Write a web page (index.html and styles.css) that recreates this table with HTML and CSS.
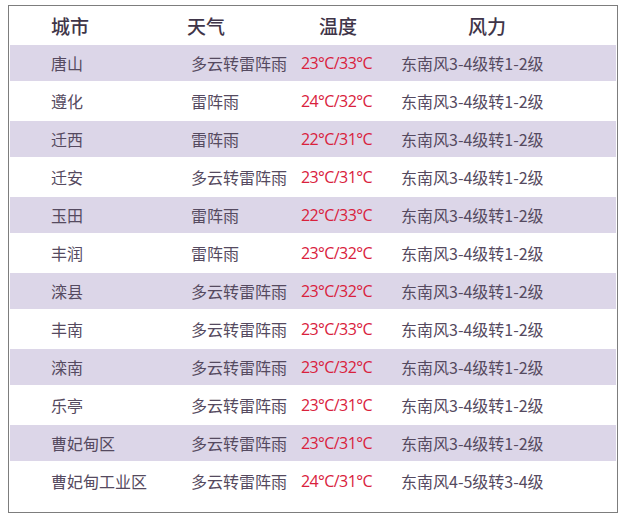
FILE: index.html
```html
<!DOCTYPE html>
<html lang="zh">
<head>
<meta charset="utf-8">
<link rel="stylesheet" href="styles.css">
</head>
<body>
<div class="box">
  <div class="row head">
    <div class="c h1">城市</div>
    <div class="c h2">天气</div>
    <div class="c h3">温度</div>
    <div class="c h4">风力</div>
  </div>
  <div class="row alt"><div class="c">唐山</div><div class="c">多云转雷阵雨</div><div class="c t">23°C/33°C</div><div class="c">东南风3-4级转1-2级</div></div>
  <div class="row"><div class="c">遵化</div><div class="c">雷阵雨</div><div class="c t">24°C/32°C</div><div class="c">东南风3-4级转1-2级</div></div>
  <div class="row alt"><div class="c">迁西</div><div class="c">雷阵雨</div><div class="c t">22°C/31°C</div><div class="c">东南风3-4级转1-2级</div></div>
  <div class="row"><div class="c">迁安</div><div class="c">多云转雷阵雨</div><div class="c t">23°C/31°C</div><div class="c">东南风3-4级转1-2级</div></div>
  <div class="row alt"><div class="c">玉田</div><div class="c">雷阵雨</div><div class="c t">22°C/33°C</div><div class="c">东南风3-4级转1-2级</div></div>
  <div class="row"><div class="c">丰润</div><div class="c">雷阵雨</div><div class="c t">23°C/32°C</div><div class="c">东南风3-4级转1-2级</div></div>
  <div class="row alt"><div class="c">滦县</div><div class="c">多云转雷阵雨</div><div class="c t">23°C/32°C</div><div class="c">东南风3-4级转1-2级</div></div>
  <div class="row"><div class="c">丰南</div><div class="c">多云转雷阵雨</div><div class="c t">23°C/33°C</div><div class="c">东南风3-4级转1-2级</div></div>
  <div class="row alt"><div class="c">滦南</div><div class="c">多云转雷阵雨</div><div class="c t">23°C/32°C</div><div class="c">东南风3-4级转1-2级</div></div>
  <div class="row"><div class="c">乐亭</div><div class="c">多云转雷阵雨</div><div class="c t">23°C/31°C</div><div class="c">东南风3-4级转1-2级</div></div>
  <div class="row alt"><div class="c">曹妃甸区</div><div class="c">多云转雷阵雨</div><div class="c t">23°C/31°C</div><div class="c">东南风3-4级转1-2级</div></div>
  <div class="row"><div class="c">曹妃甸工业区</div><div class="c">多云转雷阵雨</div><div class="c t">24°C/31°C</div><div class="c">东南风4-5级转3-4级</div></div>
</div>
</body>
</html>
```

FILE: styles.css
```css
html, body {
  margin: 0;
  padding: 0;
  background: #ffffff;
}
body {
  font-family: "Noto Sans CJK SC", "Noto Sans", sans-serif;
}
.box {
  margin: 5px 0 0 8px;
  width: 610px;
  height: 508px;
  box-sizing: border-box;
  border: 1px solid #7d7d7d;
  padding: 0 1px 13px 1px;
}
.row {
  display: grid;
  grid-template-columns: 181px 110px 100px 1fr;
  height: 38px;
  align-items: center;
  font-size: 16px;
  color: #554a60;
}
.row.alt {
  background: #dcd6e8;
  border-top: 1px solid #ffffff;
  border-bottom: 1px solid #ffffff;
  box-sizing: border-box;
}
.row .c:first-child {
  padding-left: 41px;
}
.c {
  white-space: nowrap;
  line-height: 20px;
}
.t {
  color: #d9213c;
  font-family: "Open Sans", "Noto Sans", sans-serif;
  letter-spacing: -0.6px;
}
.head {
  height: 38px;
  font-size: 19px;
  color: #3f3549;
  font-weight: 500;
  padding-top: 2px;
  box-sizing: border-box;
}
.head .h1 { padding-left: 43px; }
.head .h2 { margin-left: -4px; }
.head .h3 { margin-left: 18px; }
.head .h4 { margin-left: 67px; }
```
